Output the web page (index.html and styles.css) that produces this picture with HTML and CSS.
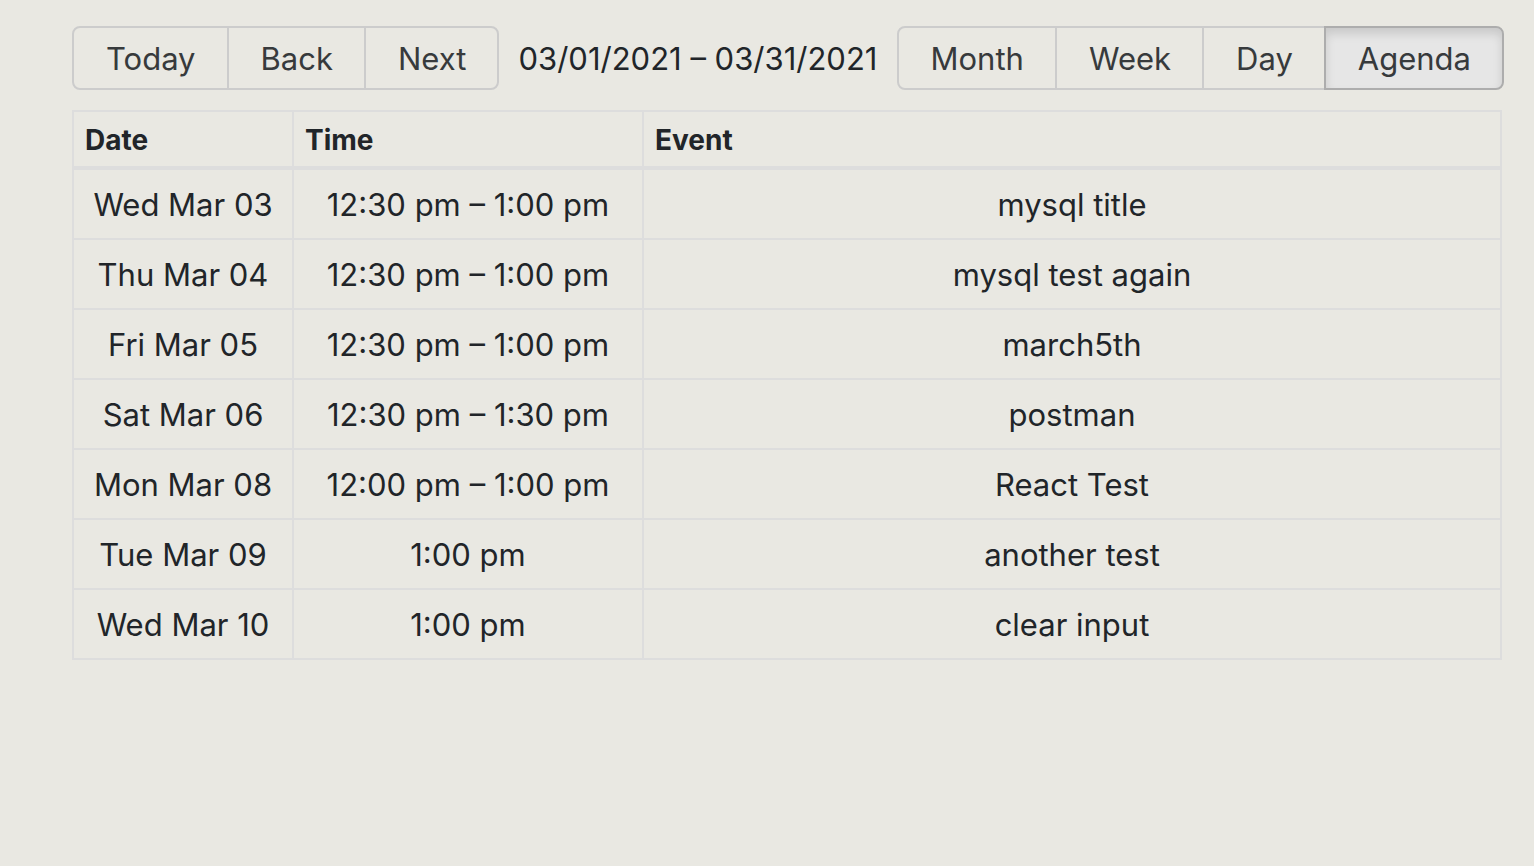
FILE: index.html
```html
<!DOCTYPE html>
<html lang="en">
<head>
<meta charset="utf-8">
<title>Agenda</title>
<link rel="stylesheet" href="styles.css">
</head>
<body>
<main class="calendar">
  <div class="toolbar">
    <div class="group">
      <button type="button">Today</button>
      <button type="button">Back</button>
      <button type="button">Next</button>
    </div>
    <span class="range">03/01/2021 – 03/31/2021</span>
    <div class="group">
      <button type="button">Month</button>
      <button type="button">Week</button>
      <button type="button">Day</button>
      <button type="button" class="active" aria-pressed="true">Agenda</button>
    </div>
  </div>
  <table class="agenda">
    <colgroup><col class="date"><col class="time"><col></colgroup>
    <thead>
      <tr><th scope="col">Date</th><th scope="col">Time</th><th scope="col">Event</th></tr>
    </thead>
    <tbody>
      <tr><td>Wed Mar 03</td><td>12:30 pm – 1:00 pm</td><td>mysql title</td></tr>
      <tr><td>Thu Mar 04</td><td>12:30 pm – 1:00 pm</td><td>mysql test again</td></tr>
      <tr><td>Fri Mar 05</td><td>12:30 pm – 1:00 pm</td><td>march5th</td></tr>
      <tr><td>Sat Mar 06</td><td>12:30 pm – 1:30 pm</td><td>postman</td></tr>
      <tr><td>Mon Mar 08</td><td>12:00 pm – 1:00 pm</td><td>React Test</td></tr>
      <tr><td>Tue Mar 09</td><td>1:00 pm</td><td>another test</td></tr>
      <tr><td>Wed Mar 10</td><td>1:00 pm</td><td>clear input</td></tr>
    </tbody>
  </table>
</main>
</body>
</html>
```
FILE: styles.css
```css
* {
  box-sizing: border-box;
}

body {
  margin: 0;
  background: #e9e8e2;
  color: #212529;
  font-family: Inter, "Liberation Sans", sans-serif;
  font-size: 31px;
  line-height: 48px;
}

.calendar {
  padding: 26px 32px 0 72px;
}

.toolbar {
  display: flex;
  align-items: center;
  margin-right: -2px;
  margin-bottom: 20px;
}

.group {
  display: flex;
  white-space: nowrap;
}

.group button {
  margin: 0 0 0 -2px;
  padding: 7px 31px 5px 32px;
  border: 2px solid #cccccc;
  background: transparent;
  color: #373a3c;
  font: inherit;
  cursor: pointer;
}

.group button:first-child {
  margin-left: 0;
  border-radius: 8px 0 0 8px;
}

.group button:last-child {
  border-radius: 0 8px 8px 0;
}

.group .active {
  border-color: #adadad;
  background: #e6e6e6;
  box-shadow: inset 0 6px 10px rgba(0, 0, 0, 0.125);
}

.range {
  flex: 1;
  padding-top: 2px;
  text-align: center;
  white-space: nowrap;
}

.agenda {
  width: 100%;
  table-layout: fixed;
  border-collapse: collapse;
}

.date {
  width: 220px;
}

.time {
  width: 350px;
}

.agenda th,
.agenda td {
  border: 2px solid #dddddd;
}

.agenda th {
  height: 57px;
  padding: 2px 11px 0;
  border-bottom-width: 4px;
  font-size: 28px;
  font-weight: 700;
  text-align: left;
}

.agenda td {
  padding: 11px 0 9px;
  text-align: center;
}
```
